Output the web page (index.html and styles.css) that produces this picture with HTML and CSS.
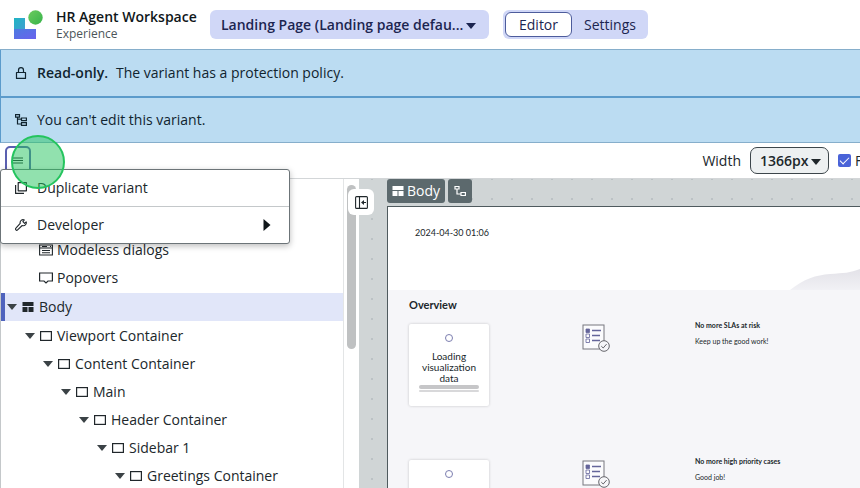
FILE: index.html
```
<!DOCTYPE html>
<html lang="en">
<head>
<meta charset="utf-8">
<title>HR Agent Workspace</title>
<link rel="stylesheet" href="styles.css">
</head>
<body>
<svg class="sprite" aria-hidden="true">
  <symbol id="caret" viewBox="0 0 10 6"><path d="M0 0h10L5 6z" fill="currentColor"/></symbol>
  <symbol id="box" viewBox="0 0 12 12"><rect x=".6" y="1.6" width="10.8" height="8.8" fill="none" stroke="currentColor" stroke-width="1.2"/></symbol>
  <symbol id="layout" viewBox="0 0 12 12"><path d="M.5 1h11v4H.5zM.5 6h5v5h-5zM6.500 6h5v5h-5z" fill="currentColor"/></symbol>
  <symbol id="check-list" viewBox="0 0 28 28">
    <rect x="1" y="1" width="21" height="24" fill="#fbfbfd" stroke="#77777f"/>
    <path d="M10 6.500h9M10 11.500h8M10 16.500h8" stroke="#64659a" stroke-width="1.600"/>
    <path d="M4 5h3.500v3.500H4z" fill="#64659a" stroke="#64659a" stroke-width=".8"/>
    <path d="M4 10h3.500v3.500H4zM4 15h3.500v3.500H4z" fill="none" stroke="#64659a" stroke-width=".8"/>
    <circle cx="22" cy="22" r="5.300" fill="#f6f6f9" stroke="#66666c"/>
    <path d="m19.300 22.200 1.900 1.800 3.400-3.900" fill="none" stroke="#66666c"/>
  </symbol>
</svg>
<header class="header">
  <svg class="logo" viewBox="0 0 30 30" aria-hidden="true">
    <defs>
      <linearGradient id="g1" x1="0" y1="0" x2="1" y2="1"><stop offset="0" stop-color="#1fb5c4"/><stop offset="1" stop-color="#3f9fd0"/></linearGradient>
      <linearGradient id="g2" x1="0" y1="0" x2="1" y2="1"><stop offset="0" stop-color="#4c7be0"/><stop offset="1" stop-color="#6a62ee"/></linearGradient>
      <linearGradient id="g3" x1="0" y1="0" x2="1" y2="1"><stop offset="0" stop-color="#6ccb5f"/><stop offset="1" stop-color="#37b34a"/></linearGradient>
    </defs>
    <path d="M1 8h11v11H1z" fill="url(#g1)"/>
    <path d="M1 19h22v10H1z" fill="url(#g2)"/>
    <circle cx="22.500" cy="7.500" r="7.200" fill="url(#g3)"/>
  </svg>
  <div class="titles">
    <h1>HR Agent Workspace</h1>
    <p>Experience</p>
  </div>
  <div class="select page-select">
    <select aria-label="Page variant"><option>Landing Page (Landing page defau...</option></select>
    <svg class="caret"><use href="#caret"/></svg>
  </div>
  <nav class="tabs">
    <button class="tab active" type="button">Editor</button>
    <button class="tab" type="button">Settings</button>
  </nav>
</header>
<div class="alert">
  <svg class="icon" viewBox="0 0 12 12"><path d="M1.500 5.500h9v5.900h-9zM3.500 5.500V3.200a2.500 2.500 0 0 1 5 0v2.300" fill="none" stroke="currentColor" stroke-width="1.200" stroke-linejoin="round"/></svg>
  <p><strong>Read-only.</strong>The variant has a protection policy.</p>
</div>
<div class="alert">
  <svg class="icon" viewBox="0 0 12 12"><path d="M.5.600h4v2.500h-4zM2.500 3.500v6.500H6M2.500 5.200H6M6.500 4h4.900v2.700H6.500zM6.500 8.700h4.900v2.700H6.500z" fill="none" stroke="currentColor" stroke-width="1.200"/></svg>
  <p>You can't edit this variant.</p>
</div>
<div class="toolbar">
  <div class="menu-anchor">
    <button class="menu-button" type="button" aria-label="Menu">
      <svg class="bars" viewBox="0 0 10 7"><path d="M0 1h10M0 3.500h10M0 6h10" stroke="currentColor"/></svg>
    </button>
    <div class="menu" role="menu">
      <button class="menu-item" type="button" role="menuitem">
        <svg class="icon" viewBox="0 0 12 12"><path d="M3.200.600h8.200v8.200H3.200zM.600 3v8.400H9" fill="none" stroke="currentColor" stroke-width="1.200" stroke-linejoin="round"/></svg>
        <span>Duplicate variant</span>
      </button>
      <button class="menu-item" type="button" role="menuitem">
        <svg class="icon" viewBox="0 0 12 12"><path d="M9.300.900a3 3 0 0 0-4.100 3.500L.900 9.200a1.100 1.100 0 0 0 1.700 1.700l4.600-4.400a3 3 0 0 0 4-3.700L9.600 4.300 7.900 2.600z" fill="none" stroke="currentColor" stroke-width="1.100" stroke-linejoin="round"/></svg>
        <span>Developer</span>
        <svg class="submenu" viewBox="0 0 7 12"><path d="M0 0l7 6-7 6z" fill="currentColor"/></svg>
      </button>
    </div>
    <span class="click-marker"></span>
  </div>
  <div class="view-options">
    <label for="width">Width</label>
    <div class="select width-select">
      <select id="width"><option>1366px</option></select>
      <svg class="caret"><use href="#caret"/></svg>
    </div>
    <label class="check"><input type="checkbox" checked>F</label>
  </div>
</div>
<main class="workspace">
  <aside class="sidebar">
    <ul class="tree">
      <li><div class="node leaf"><svg class="icon wide" viewBox="0 0 14 12"><path d="M.600 1h12.800v10H.600zM.600 4h12.800M3 6.500h8M3 8.700h8M3 2.500h5M11 2.500h1" fill="none" stroke="currentColor" stroke-width="1.100"/></svg>Modeless dialogs</div></li>
      <li><div class="node leaf"><svg class="icon wide" viewBox="0 0 14 12"><path d="M.600 1h12.800v8H9l-2 2-2-2H.600z" fill="none" stroke="currentColor" stroke-width="1.200"/></svg>Popovers</div></li>
      <li><div class="node selected"><svg class="caret"><use href="#caret"/></svg><svg class="icon"><use href="#layout"/></svg>Body</div>
        <ul><li><div class="node"><svg class="caret"><use href="#caret"/></svg><svg class="icon"><use href="#box"/></svg>Viewport Container</div>
          <ul><li><div class="node"><svg class="caret"><use href="#caret"/></svg><svg class="icon"><use href="#box"/></svg>Content Container</div>
            <ul><li><div class="node"><svg class="caret"><use href="#caret"/></svg><svg class="icon"><use href="#box"/></svg>Main</div>
              <ul><li><div class="node"><svg class="caret"><use href="#caret"/></svg><svg class="icon"><use href="#box"/></svg>Header Container</div>
                <ul><li><div class="node"><svg class="caret"><use href="#caret"/></svg><svg class="icon"><use href="#box"/></svg>Sidebar 1</div>
                  <ul><li><div class="node"><svg class="caret"><use href="#caret"/></svg><svg class="icon"><use href="#box"/></svg>Greetings Container</div></li></ul>
                </li></ul>
              </li></ul>
            </li></ul>
          </li></ul>
        </li></ul>
      </li>
    </ul>
    <div class="scrollbar"><div class="thumb"></div></div>
  </aside>
  <section class="canvas">
    <button class="collapse" type="button" aria-label="Collapse panel">
      <svg viewBox="0 0 13 13"><rect x=".6" y=".6" width="11.800" height="11.800" rx="1" fill="none" stroke="currentColor" stroke-width="1.100"/><path d="M4.500.600v11.800M11 6.500H7" fill="none" stroke="currentColor" stroke-width="1.100"/><path d="M9 4v5L6 6.500z" fill="currentColor"/></svg>
    </button>
    <div class="tags">
      <button class="tag" type="button"><svg class="icon"><use href="#layout"/></svg>Body</button>
      <button class="tag" type="button" aria-label="Show hierarchy"><svg class="icon" viewBox="0 0 12 12"><path d="M1 1.500h4v2.500H1zM3 4v5h3.500M7 7.500h4.400v3H7z" fill="none" stroke="currentColor" stroke-width="1.200"/></svg></button>
    </div>
    <div class="frame">
      <div class="banner">
        <time datetime="2024-04-30T01:06">2024-04-30 01:06</time>
        <svg class="wave" viewBox="0 0 70 22" preserveAspectRatio="none"><defs><linearGradient id="g4" x1="0" y1="0" x2="0" y2="1"><stop offset="0" stop-color="#e3e2e8"/><stop offset="1" stop-color="#f1f1f5"/></linearGradient></defs><path d="M0 22C14 11 26 7 40 6c14-1 20-1 30-5v21z" fill="url(#g4)"/></svg>
      </div>
      <div class="overview">
        <h2>Overview</h2>
        <div class="summary">
          <div class="card"><span class="spinner"></span><p>Loading visualization data</p><span class="bar"></span><span class="bar thin"></span></div>
          <svg class="list-icon"><use href="#check-list"/></svg>
          <div class="message"><h3>No more SLAs at risk</h3><p>Keep up the good work!</p></div>
        </div>
        <div class="summary">
          <div class="card"><span class="spinner"></span></div>
          <svg class="list-icon"><use href="#check-list"/></svg>
          <div class="message"><h3>No more high priority cases</h3><p>Good job!</p></div>
        </div>
      </div>
    </div>
  </section>
</main>
</body>
</html>
```
FILE: styles.css
```
* { box-sizing: border-box; }
body {
  margin: 0;
  height: 100vh;
  display: flex;
  flex-direction: column;
  overflow: hidden;
  background: #fff;
  color: #20272b;
  font: 14px/20px "Open Sans", "Noto Sans", sans-serif;
}
h1, h2, h3, p, ul { margin: 0; padding: 0; }
ul { list-style: none; }
button, select, input { font: inherit; color: inherit; margin: 0; }
svg { display: block; flex: none; }
.sprite { position: absolute; width: 0; height: 0; }
.icon { width: 12px; height: 12px; }
.icon.wide { width: 14px; }
.caret { width: 10px; height: 6px; }

.header {
  flex: none;
  display: flex;
  align-items: center;
  height: 50px;
  padding-left: 13px;
  border-bottom: 1px solid #86aecb;
}
.logo { width: 30px; height: 30px; }
.titles { width: 154px; margin-left: 13px; white-space: nowrap; }
h1 { font-size: 14px; line-height: 18px; font-weight: 600; color: #10171a; }
.titles p { font-size: 12px; line-height: 16px; color: #4b5559; }

.select { position: relative; display: flex; }
.select select { appearance: none; width: 100%; border: 0; background: none; font-weight: 600; }
.select .caret { position: absolute; right: 13px; top: 50%; margin-top: -2px; pointer-events: none; }
.page-select { width: 279px; height: 29px; border-radius: 6px; background: #d0d7f7; color: #1c2550; }
.page-select select { padding: 0 24px 0 11px; }
.tabs { display: flex; margin-left: 14px; padding: 2px; height: 29px; border-radius: 6px; background: #d0d7f7; }
.tab { border: 1px solid transparent; border-radius: 6px; background: none; padding: 0 9px 0 11px; font-weight: 500; line-height: 20px; color: #1c2550; }
.tab.active { background: #fff; border-color: #4d5c9c; padding: 0 13px; }

.alert {
  flex: none;
  display: flex;
  align-items: center;
  gap: 10px;
  height: 48px;
  padding-left: 13px;
  background: #bbdcf2;
  border: solid #5b9bcb;
  border-width: 0 0 2px 1px;
  color: #10242f;
}
.alert + .alert { height: 45px; border-bottom: 1px solid #86aecb; }
.alert .icon { margin-left: 1px; }
.alert strong { margin-right: 8px; font-weight: 600; }

.toolbar {
  flex: none;
  display: flex;
  justify-content: space-between;
  height: 36px;
  padding-left: 5px;
  border-bottom: 1px solid #d3d6d8;
}
.menu-button {
  display: flex;
  align-items: center;
  justify-content: center;
  width: 26px;
  height: 28px;
  margin-top: 3px;
  border: 2px solid #5a5fb0;
  border-radius: 5px;
  background: #fff;
}
.bars { width: 10px; height: 7px; }
.menu {
  position: absolute;
  z-index: 2;
  left: 0;
  top: 169px;
  width: 290px;
  border: 1px solid #6c7478;
  border-radius: 3px;
  background: #fff;
  box-shadow: 0 2px 6px #0004;
}
.menu-item {
  display: flex;
  align-items: center;
  gap: 10px;
  width: 100%;
  height: 36px;
  padding: 0 18px 0 14px;
  border: 0;
  background: none;
  text-align: left;
}
.menu-item + .menu-item { height: 37px; border-top: 1px solid #c4c8ca; }
.submenu { width: 8px; height: 12px; margin-left: auto; color: #10171a; }
.click-marker {
  position: absolute;
  z-index: 3;
  left: 11px;
  top: 135px;
  width: 54px;
  height: 54px;
  border: 2px solid #24c45e;
  border-radius: 50%;
  background: #24c45e80;
}
.view-options { display: flex; align-items: center; gap: 9px; }
.width-select { width: 79px; height: 27px; border: 1px solid #3d464b; border-radius: 7px; background: #edf0f1; }
.width-select select { padding: 0 18px 0 9px; }
.width-select .caret { right: 7px; }
.check { display: flex; align-items: center; gap: 4px; width: 22px; overflow: hidden; }
.check input { appearance: none; flex: none; width: 13px; height: 13px; border-radius: 2px; background: #4a63d8; display: grid; place-items: center; }
.check input::before { content: ""; width: 8px; height: 4px; border: solid #fff; border-width: 0 0 1px 1px; transform: translateY(-1px) rotate(-45deg); }

.workspace { flex: 1; min-height: 0; display: flex; }
.sidebar { flex: none; display: flex; width: 359px; border-left: 1px solid #c4c8ca; overflow: hidden; }
.tree { flex: 1; padding-top: 57px; }
.tree ul { padding-left: 18px; }
.node { display: flex; align-items: center; gap: 5px; height: 28px; padding-left: 6px; white-space: nowrap; }
.leaf { padding-left: 38px; gap: 4px; }
.node.selected { margin: 1px 0; padding-left: 2px; border-left: 4px solid #4f63bd; background: #e1e6f9; }
.node .caret { color: #3b4246; }
.scrollbar { width: 16px; padding: 6px 3px; border-left: 1px solid #e3e5e6; }
.thumb { width: 9px; height: 164px; border-radius: 5px; background: #bfc1c2; }

.canvas {
  position: relative;
  flex: 1;
  min-width: 0;
  display: flex;
  flex-direction: column;
  padding-left: 28px;
  background: #d0d5d6 radial-gradient(circle, #bcc2c5 1px, transparent 1px) 3px 10px / 20px 20px;
}
.collapse {
  position: absolute;
  left: -11px;
  top: 10px;
  display: grid;
  place-items: center;
  width: 26px;
  height: 26px;
  padding: 0;
  border: 0;
  border-radius: 6px;
  background: #fff;
}
.collapse svg { width: 13px; height: 13px; }
.tags { display: flex; gap: 3px; padding-bottom: 3px; }
.tag { display: flex; align-items: center; gap: 4px; height: 24px; padding: 0 6px; border: 0; border-radius: 3px; background: #5c696d; color: #fff; }
.tag:first-child { padding: 0 5px; gap: 3px; }
.frame { flex: 1; min-height: 0; display: flex; flex-direction: column; border: solid #4f5a5e; border-width: 1px 0 0 1px; background: #f6f6f9; font-family: Lato, sans-serif; overflow: hidden; }
.banner { flex: none; display: flex; justify-content: space-between; height: 83px; padding-left: 27px; background: #fff; }
.banner time { margin-top: 20px; font-size: 9px; line-height: 12px; }
.wave { align-self: flex-end; width: 70px; height: 22px; }
.overview { padding: 7px 21px 0; }
h2 { font-size: 11px; line-height: 16px; font-family: Lato, sans-serif; }
.summary { display: grid; grid-template-columns: 80px 27px 1fr; column-gap: 93px; height: 136px; }
h2 + .summary { margin-top: 11px; }
.card { display: flex; flex-direction: column; align-items: center; height: 82px; padding: 10px 8px 0; border-radius: 2px; background: #fff; box-shadow: 0 0 3px #0003; }
.spinner { flex: none; width: 8px; height: 8px; border: 1px solid #7c7eb0; border-radius: 50%; }
.card p { margin: 9px 0 1px; font-size: 10px; line-height: 11px; text-align: center; }
.bar { width: 60px; height: 4px; border-radius: 2px; background: #c6c6c8; }
.bar.thin { height: 2px; margin-top: 1px; background: #d8d8da; }
.list-icon { width: 28px; height: 28px; }
.message { margin-left: -7px; padding-top: 1px; }
h3, .message p { font-size: 7px; line-height: 10px; font-weight: 400; }
h3 { font-weight: 700; margin: -5px 0 6px; }
```
